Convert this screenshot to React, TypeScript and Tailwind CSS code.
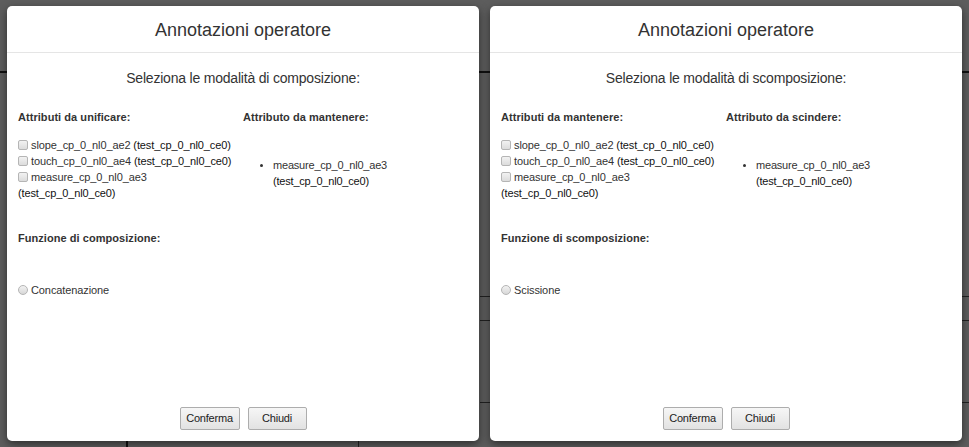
import React from 'react'

type Attr = { name: string; parent: string }

const attrs: Attr[] = [
  { name: 'slope_cp_0_nl0_ae2', parent: 'test_cp_0_nl0_ce0' },
  { name: 'touch_cp_0_nl0_ae4', parent: 'test_cp_0_nl0_ce0' },
  { name: 'measure_cp_0_nl0_ae3', parent: 'test_cp_0_nl0_ce0' },
]

function Check() {
  return (
    <span className="inline-block w-[10px] h-[10px] mr-[3px] align-[-1px] rounded-[2px] border border-[#b5b5b5] bg-gradient-to-b from-[#f2f2f2] to-[#dcdcdc]" />
  )
}

function Radio() {
  return (
    <span className="inline-block w-[10px] h-[10px] mr-[3px] align-[-1px] rounded-full border border-[#b5b5b5] bg-gradient-to-b from-[#f2f2f2] to-[#d8d8d8]" />
  )
}

function Modal({
  subtitle,
  leftTitle,
  rightTitle,
  funcTitle,
  option,
}: {
  subtitle: string
  leftTitle: string
  rightTitle: string
  funcTitle: string
  option: string
}) {
  return (
    <div className="w-[472px] h-[435px] shrink-0 bg-white rounded-[5px] shadow-[0_3px_9px_rgba(0,0,0,0.5)] flex flex-col text-[#333]">
      <div className="h-[47px] border-b border-[#e5e5e5] flex items-center justify-center">
        <h4 className="text-[18px] leading-[20px] pt-[1px]">Annotazioni operatore</h4>
      </div>
      <div className="flex-1 flex flex-col px-[11px]">
        <p className="text-[14px] leading-[16px] tracking-[-0.2px] text-center mt-[17px]">{subtitle}</p>
        <div className="flex mt-[24px]">
          <div className="w-[225px] pr-[4px]">
            <div className="text-[11px] leading-[14px] font-bold tracking-[0.05px]">{leftTitle}</div>
            <div className="mt-[13px] text-[11px] leading-[16px] tracking-[-0.12px]">
              {attrs.map((a) => (
                <div key={a.name}>
                  <Check />
                  {a.name} <span className="text-[#111]">({a.parent})</span>
                </div>
              ))}
            </div>
          </div>
          <div className="flex-1">
            <div className="text-[11px] leading-[14px] font-bold tracking-[0.05px]">{rightTitle}</div>
            <ul className="mt-[33px] pl-[30px] pr-[10px] list-disc text-[11px] leading-[16px] tracking-[-0.2px] marker:text-[10px]">
              <li>
                measure_cp_0_nl0_ae3 <span className="text-[#111]">(test_cp_0_nl0_ce0)</span>
              </li>
            </ul>
          </div>
        </div>
        <div className="mt-[30px] text-[11px] leading-[14px] font-bold tracking-[0.05px]">{funcTitle}</div>
        <div className="mt-[37px] text-[11px] leading-[16px] tracking-[-0.1px]">
          <Radio />
          {option}
        </div>
        <div className="mt-auto mb-[11px] flex justify-center gap-[8px]">
          <button className="w-[60px] h-[23px] text-[11px] tracking-[-0.2px] text-[#222] border border-[#adadad] rounded-[2px] bg-gradient-to-b from-[#f6f6f6] to-[#e2e2e2]">
            Conferma
          </button>
          <button className="w-[59px] h-[23px] text-[11px] tracking-[-0.2px] text-[#222] border border-[#adadad] rounded-[2px] bg-gradient-to-b from-[#f6f6f6] to-[#e2e2e2]">
            Chiudi
          </button>
        </div>
      </div>
    </div>
  )
}

export default function App() {
  return (
    <div
      className="relative w-[969px] h-[447px] overflow-hidden bg-[#5d5d5d]"
      style={{ fontFamily: '"Liberation Sans", Arial, sans-serif' }}
    >
      {/* diagram faintly visible behind the backdrop */}
      <div className="absolute left-0 right-0 top-[71px] h-[2px] bg-[#111]" />
      <div className="absolute left-[126px] top-[440px] w-[2px] h-[7px] bg-[#111]" />
      <div className="absolute left-[358px] top-[440px] w-[1px] h-[7px] bg-[#222]" />
      <div className="absolute left-[480px] top-[296px] w-[10px] h-[1px] bg-[#222]" />
      <div className="absolute left-[480px] top-[320px] w-[10px] h-[1px] bg-[#222]" />
      <div className="absolute left-[480px] top-[402px] w-[10px] h-[1px] bg-[#222]" />
      <div className="absolute left-[962px] top-[296px] w-[7px] h-[1px] bg-[#222]" />
      <div className="absolute left-[962px] top-[320px] w-[7px] h-[1px] bg-[#222]" />
      <div className="absolute left-[962px] top-[402px] w-[7px] h-[1px] bg-[#222]" />
      <div className="relative flex gap-[11px] px-[7px] pt-[6px]">
        <Modal
          subtitle="Seleziona le modalità di composizione:"
          leftTitle="Attributi da unificare:"
          rightTitle="Attributo da mantenere:"
          funcTitle="Funzione di composizione:"
          option="Concatenazione"
        />
        <Modal
          subtitle="Seleziona le modalità di scomposizione:"
          leftTitle="Attributi da mantenere:"
          rightTitle="Attributo da scindere:"
          funcTitle="Funzione di scomposizione:"
          option="Scissione"
        />
      </div>
    </div>
  )
}
